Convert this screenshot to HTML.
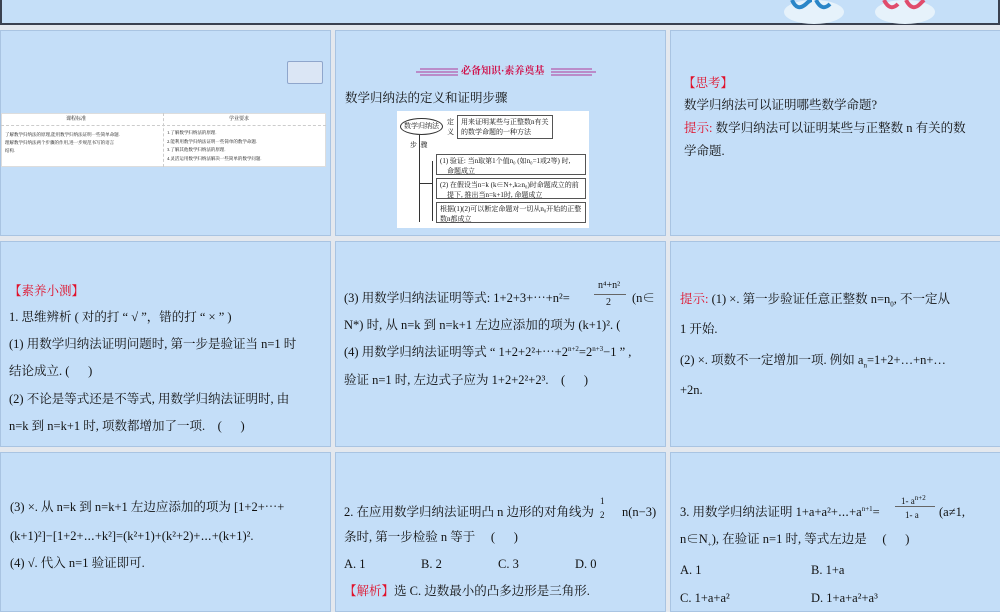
<!DOCTYPE html>
<html><head><meta charset="utf-8"><style>
*{margin:0;padding:0;box-sizing:border-box}
body{width:1000px;height:600px;background:#e4e8ee;position:relative;overflow:hidden;font-family:"Liberation Serif","Noto Serif CJK SC","Noto Sans CJK SC",serif;color:#111}
.top{position:absolute;left:0;top:0;width:1000px;height:25px;background:#c5dff8;border:2px solid #3a4150;border-top:none}
.p{position:absolute;background:#c4def8;border:1px solid #a9c4e2;overflow:hidden}
.t{position:absolute;font-size:12.5px;white-space:nowrap;line-height:1}
.r{color:#e0102a}
sup,sub{font-size:7px}
.box{position:absolute;border:1px solid #555;background:#fff;font-size:7px;line-height:10px;padding:1px 3px;white-space:nowrap}
</style></head><body>
<div class="top">
<svg style="position:absolute;left:770px;top:0" width="180" height="24"><ellipse cx="42" cy="12" rx="30" ry="12" fill="#e6f2fb"/><path d="M20 0 q5 12 14 4 q4 -4 6 -4 M44 0 q6 12 14 4" stroke="#2a86c8" stroke-width="4" fill="none"/><ellipse cx="133" cy="12" rx="30" ry="12" fill="#e6f2fb"/><path d="M112 0 q6 12 14 4 M134 0 q6 12 14 4 q3-3 4-4" stroke="#e04c6c" stroke-width="4" fill="none"/></svg>
</div>

<!-- Row 1 -->
<div class="p" style="left:0;top:30px;width:331px;height:206px">
 <div style="position:absolute;left:286px;top:30px;width:36px;height:23px;background:#dbe6f5;border:1px solid #8fa6cc;border-radius:2px"></div>
 <div style="position:absolute;left:0;top:82px;width:325px;height:54px;background:#fff;border:1px solid #ddd"></div>
 <div style="position:absolute;left:162px;top:82px;width:1px;height:54px;border-left:1px dashed #ccc"></div>
 <div style="position:absolute;left:0;top:94px;width:325px;border-top:1px dashed #ccc"></div>
 <div class="t" style="left:65px;top:86px;font-size:5px">课程标准</div>
 <div class="t" style="left:228px;top:86px;font-size:5px">学业要求</div>
 <div class="t" style="left:4px;top:100px;font-size:4.5px;line-height:8px">了解数学归纳法的原理,能用数学归纳法证明一些简单命题.<br>理解数学归纳法两个步骤的作用,进一步规范书写的语言<br>结构.</div>
 <div class="t" style="left:166px;top:98px;font-size:4.5px;line-height:8.5px">1.了解数学归纳法的原理.<br>2.能利用数学归纳法证明一些简单的数学命题.<br>3.了解其他数学归纳法的原理.<br>4.灵活运用数学归纳法解决一些简单的数学问题.</div>
</div>
<div class="p" style="left:335px;top:30px;width:331px;height:206px">
 <svg style="position:absolute;left:80px;top:35px" width="180" height="12"><g stroke="#b03a9a" stroke-width="1"><line x1="4" y1="3" x2="42" y2="3"/><line x1="0" y1="6" x2="42" y2="6"/><line x1="4" y1="9" x2="42" y2="9"/><line x1="135" y1="3" x2="176" y2="3"/><line x1="135" y1="6" x2="180" y2="6"/><line x1="135" y1="9" x2="176" y2="9"/></g></svg>
 <div class="t" style="left:125px;top:36px;font-size:10px;color:#d0104a;font-weight:bold">必备知识·素养奠基</div>
 <div class="t" style="left:9px;top:61px;font-size:12.5px">数学归纳法的定义和证明步骤</div>
 <div style="position:absolute;left:61px;top:80px;width:192px;height:117px;background:#fff"></div>
 <div style="position:absolute;left:64px;top:87px;width:43px;height:17px;border:1px solid #333;border-radius:50%;font-size:7px;text-align:center;line-height:15px;background:#fff">数学归纳法</div>
 <div class="t" style="left:111px;top:86px;font-size:7px;line-height:10px">定<br>义</div>
 <div class="box" style="left:121px;top:84px;width:96px">用来证明某些与正整数n有关<br>的数学命题的一种方法</div>
 <div class="t" style="left:74px;top:111px;font-size:7px">步&nbsp;&nbsp;骤</div>
 <div style="position:absolute;left:83px;top:104px;width:1px;height:87px;background:#333"></div>
 <div style="position:absolute;left:83px;top:152px;width:13px;height:1px;background:#333"></div>
 <div style="position:absolute;left:96px;top:130px;width:1px;height:60px;background:#333"></div>
 <div class="box" style="left:100px;top:123px;width:150px;height:21px">(1) 验证: 当n取第1个值n₀ (如n₀=1或2等) 时,<br>&nbsp;&nbsp;&nbsp;&nbsp;命题成立</div>
 <div class="box" style="left:100px;top:147px;width:150px;height:21px">(2) 在假设当n=k (k∈N+,k≥n₀)时命题成立的前<br>&nbsp;&nbsp;&nbsp;&nbsp;提下, 推出当n=k+1时, 命题成立</div>
 <div class="box" style="left:100px;top:171px;width:150px;height:21px">根据(1)(2)可以断定命题对一切从n₀开始的正整<br>数n都成立</div>
</div>
<div class="p" style="left:670px;top:30px;width:331px;height:206px">
 <div class="t r" style="left:12px;top:46px">【思考】</div>
 <div class="t" style="left:13px;top:68px">数学归纳法可以证明哪些数学命题?</div>
 <div class="t" style="left:13px;top:91px"><span class="r">提示:</span> 数学归纳法可以证明某些与正整数 n 有关的数</div>
 <div class="t" style="left:13px;top:114px">学命题.</div>
</div>

<!-- Row 2 -->
<div class="p" style="left:0;top:241px;width:331px;height:206px">
 <div class="t r" style="left:8px;top:43px">【素养小测】</div>
 <div class="t" style="left:8px;top:69px">1. 思维辨析 ( 对的打 “ √ ”，错的打 “ × ” )</div>
 <div class="t" style="left:8px;top:96px">(1) 用数学归纳法证明问题时, 第一步是验证当 n=1 时</div>
 <div class="t" style="left:8px;top:123px">结论成立. (&nbsp;&nbsp;&nbsp;&nbsp;&nbsp;&nbsp;)</div>
 <div class="t" style="left:8px;top:151px">(2) 不论是等式还是不等式, 用数学归纳法证明时, 由</div>
 <div class="t" style="left:8px;top:178px">n=k 到 n=k+1 时, 项数都增加了一项.&nbsp;&nbsp;&nbsp;&nbsp;(&nbsp;&nbsp;&nbsp;&nbsp;&nbsp;&nbsp;)</div>
</div>
<div class="p" style="left:335px;top:241px;width:331px;height:206px">
 <div class="t" style="left:8px;top:50px">(3) 用数学归纳法证明等式: 1+2+3+⋯+n²=</div>
 <div class="t" style="left:262px;top:39px;font-size:10px">n⁴+n²</div>
 <div style="position:absolute;left:258px;top:52px;width:32px;height:1px;background:#666"></div>
 <div class="t" style="left:270px;top:56px;font-size:10px">2</div>
 <div class="t" style="left:296px;top:50px">(n∈</div>
 <div class="t" style="left:8px;top:77px">N*) 时, 从 n=k 到 n=k+1 左边应添加的项为 (k+1)². (</div>
 <div class="t" style="left:8px;top:104px">(4) 用数学归纳法证明等式 “ 1+2+2²+⋯+2<sup>n+2</sup>=2<sup>n+3</sup>−1 ” ,</div>
 <div class="t" style="left:8px;top:132px">验证 n=1 时, 左边式子应为 1+2+2²+2³.&nbsp;&nbsp;&nbsp;&nbsp;(&nbsp;&nbsp;&nbsp;&nbsp;&nbsp;&nbsp;)</div>
</div>
<div class="p" style="left:670px;top:241px;width:331px;height:206px">
 <div class="t" style="left:9px;top:51px"><span class="r">提示:</span> (1) ×. 第一步验证任意正整数 n=n<sub>0</sub>, 不一定从</div>
 <div class="t" style="left:9px;top:81px">1 开始.</div>
 <div class="t" style="left:9px;top:112px">(2) ×. 项数不一定增加一项. 例如 a<sub>n</sub>=1+2+…+n+…</div>
 <div class="t" style="left:9px;top:142px">+2n.</div>
</div>

<!-- Row 3 -->
<div class="p" style="left:0;top:452px;width:331px;height:160px">
 <div class="t" style="left:9px;top:48px">(3) ×. 从 n=k 到 n=k+1 左边应添加的项为 [1+2+⋯+</div>
 <div class="t" style="left:9px;top:77px">(k+1)²]−[1+2+⋯+k²]=(k²+1)+(k²+2)+⋯+(k+1)².</div>
 <div class="t" style="left:9px;top:104px">(4) √. 代入 n=1 验证即可.</div>
</div>
<div class="p" style="left:335px;top:452px;width:331px;height:160px">
 <div class="t" style="left:8px;top:53px">2. 在应用数学归纳法证明凸 n 边形的对角线为</div>
 <div class="t" style="left:264px;top:44px;font-size:9px">1</div>
 <div class="t" style="left:264px;top:58px;font-size:9px">2</div>
 <div class="t" style="left:286px;top:53px">n(n−3)</div>
 <div class="t" style="left:8px;top:78px">条时, 第一步检验 n 等于&nbsp;&nbsp;&nbsp;&nbsp;&nbsp;(&nbsp;&nbsp;&nbsp;&nbsp;&nbsp;&nbsp;)</div>
 <div class="t" style="left:8px;top:105px">A. 1</div><div class="t" style="left:85px;top:105px">B. 2</div><div class="t" style="left:162px;top:105px">C. 3</div><div class="t" style="left:239px;top:105px">D. 0</div>
 <div class="t" style="left:8px;top:132px"><span class="r">【解析】</span>选 C. 边数最小的凸多边形是三角形.</div>
</div>
<div class="p" style="left:670px;top:452px;width:331px;height:160px">
 <div class="t" style="left:9px;top:53px">3. 用数学归纳法证明 1+a+a²+⋯+a<sup>n+1</sup>=</div>
 <div class="t" style="left:230px;top:42px;font-size:9px">1- a<sup>n+2</sup></div>
 <div style="position:absolute;left:224px;top:53px;width:40px;height:1px;background:#666"></div>
 <div class="t" style="left:234px;top:58px;font-size:9px">1- a</div>
 <div class="t" style="left:268px;top:53px">(a≠1,</div>
 <div class="t" style="left:9px;top:80px">n∈N<sub>+</sub>), 在验证 n=1 时, 等式左边是&nbsp;&nbsp;&nbsp;&nbsp;&nbsp;(&nbsp;&nbsp;&nbsp;&nbsp;&nbsp;&nbsp;)</div>
 <div class="t" style="left:9px;top:111px">A. 1</div><div class="t" style="left:140px;top:111px">B. 1+a</div>
 <div class="t" style="left:9px;top:139px">C. 1+a+a²</div><div class="t" style="left:140px;top:139px">D. 1+a+a²+a³</div>
</div>
</body></html>
